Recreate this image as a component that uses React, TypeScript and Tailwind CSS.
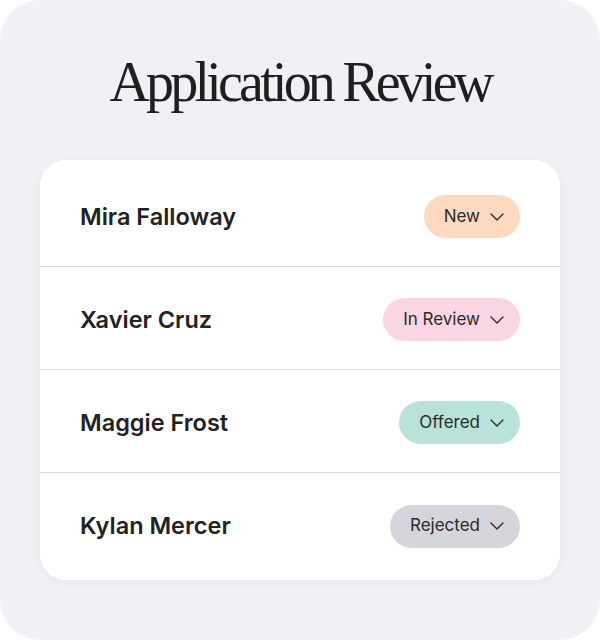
const applicants = [
  { name: "Mira Falloway", status: "New", color: "bg-[#fdd9c0]" },
  { name: "Xavier Cruz", status: "In Review", color: "bg-[#fad5e3]" },
  { name: "Maggie Frost", status: "Offered", color: "bg-[#b9e2da]" },
  { name: "Kylan Mercer", status: "Rejected", color: "bg-[#d5d5db]" },
];

const Chevron = () => (
  <svg width="14" height="8" viewBox="0 0 14 8" fill="none">
    <path d="M1 1l6 6 6-6" stroke="#2a2a2a" strokeWidth="1.35" strokeLinecap="round" strokeLinejoin="round" />
  </svg>
);

const App = () => {
  return (
    <div className="w-[600px] h-[640px] bg-white">
      <div className="w-full h-full rounded-[40px] bg-[#f0f1f5] px-10 pt-[50px]">
        <h1 className="text-center text-[56px] leading-[64px] tracking-[-3.8px] text-[#1f1f1f] font-['Liberation_Serif',serif]">
          Application Review
        </h1>
        <div className="mt-[46px] py-1 bg-white rounded-[26px] shadow-[0_2px_12px_rgba(0,0,0,0.04)] font-['Inter',sans-serif]">
          {applicants.map((a, index) => (
            <div
              key={index}
              className={
                "h-[103px] pt-[3px] flex items-center justify-between px-10 " +
                (index < applicants.length - 1 ? "border-b border-[#dcdce0]" : "")
              }
            >
              <p className="text-[23.5px] font-semibold text-[#222]">{a.name}</p>
              <div
                className={
                  "h-[43px] rounded-full flex items-center gap-[10px] pl-5 pr-4 text-[17px] text-[#2a2a2a] " +
                  a.color
                }
              >
                <span>{a.status}</span>
                <Chevron />
              </div>
            </div>
          ))}
        </div>
      </div>
    </div>
  );
};

export default App;
